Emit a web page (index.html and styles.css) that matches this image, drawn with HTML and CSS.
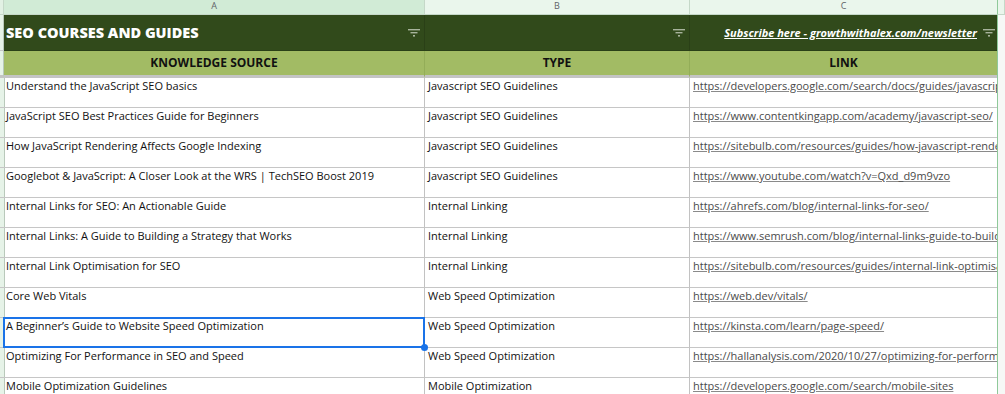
FILE: index.html
```html
<!DOCTYPE html>
<html>
<head>
<meta charset="utf-8">
<link rel="stylesheet" href="styles.css">
</head>
<body>
<div class="sheet">
  <div class="row colheads">
    <div class="c corner"></div>
    <div class="c ca sel">A</div>
    <div class="c cb">B</div>
    <div class="c cc">C</div>
    <div class="c edge"></div>
  </div>
  <div class="row title">
    <div class="c corner"></div>
    <div class="c ca"><span class="ttl">SEO COURSES AND GUIDES</span><svg class="filt" width="12" height="8" viewBox="0 0 12 8"><rect x="0" y="0" width="12" height="1.4"/><rect x="2.5" y="3" width="7" height="1.4"/><rect x="5" y="6" width="2" height="1.6"/></svg></div>
    <div class="c cb"><svg class="filt" width="12" height="8" viewBox="0 0 12 8"><rect x="0" y="0" width="12" height="1.4"/><rect x="2.5" y="3" width="7" height="1.4"/><rect x="5" y="6" width="2" height="1.6"/></svg></div>
    <div class="c cc"><span class="sub">Subscribe here - growthwithalex.com/newsletter</span><svg class="filt" width="12" height="8" viewBox="0 0 12 8"><rect x="0" y="0" width="12" height="1.4"/><rect x="2.5" y="3" width="7" height="1.4"/><rect x="5" y="6" width="2" height="1.6"/></svg></div>
    <div class="c edge"></div>
  </div>
  <div class="row head">
    <div class="c corner"></div>
    <div class="c ca">KNOWLEDGE SOURCE</div>
    <div class="c cb">TYPE</div>
    <div class="c cc">LINK</div>
    <div class="c edge"></div>
  </div>
  <div class="row data">
    <div class="c corner"></div>
    <div class="c ca">Understand the JavaScript SEO basics</div>
    <div class="c cb">Javascript SEO Guidelines</div>
    <div class="c cc"><span class="lnk">https://developers.google.com/search/docs/guides/javascript-seo-basics</span></div>
    <div class="c edge"></div>
  </div>
  <div class="row data">
    <div class="c corner"></div>
    <div class="c ca">JavaScript SEO Best Practices Guide for Beginners</div>
    <div class="c cb">Javascript SEO Guidelines</div>
    <div class="c cc"><span class="lnk">https://www.contentkingapp.com/academy/javascript-seo/</span></div>
    <div class="c edge"></div>
  </div>
  <div class="row data">
    <div class="c corner"></div>
    <div class="c ca">How JavaScript Rendering Affects Google Indexing</div>
    <div class="c cb">Javascript SEO Guidelines</div>
    <div class="c cc"><span class="lnk">https://sitebulb.com/resources/guides/how-javascript-rendering-affects-google-indexing/</span></div>
    <div class="c edge"></div>
  </div>
  <div class="row data">
    <div class="c corner"></div>
    <div class="c ca">Googlebot &amp; JavaScript: A Closer Look at the WRS | TechSEO Boost 2019</div>
    <div class="c cb">Javascript SEO Guidelines</div>
    <div class="c cc"><span class="lnk">https://www.youtube.com/watch?v=Qxd_d9m9vzo</span></div>
    <div class="c edge"></div>
  </div>
  <div class="row data">
    <div class="c corner"></div>
    <div class="c ca">Internal Links for SEO: An Actionable Guide</div>
    <div class="c cb">Internal Linking</div>
    <div class="c cc"><span class="lnk">https://ahrefs.com/blog/internal-links-for-seo/</span></div>
    <div class="c edge"></div>
  </div>
  <div class="row data">
    <div class="c corner"></div>
    <div class="c ca">Internal Links: A Guide to Building a Strategy that Works</div>
    <div class="c cb">Internal Linking</div>
    <div class="c cc"><span class="lnk">https://www.semrush.com/blog/internal-links-guide-to-building-a-strategy/</span></div>
    <div class="c edge"></div>
  </div>
  <div class="row data">
    <div class="c corner"></div>
    <div class="c ca">Internal Link Optimisation for SEO</div>
    <div class="c cb">Internal Linking</div>
    <div class="c cc"><span class="lnk">https://sitebulb.com/resources/guides/internal-link-optimisation/</span></div>
    <div class="c edge"></div>
  </div>
  <div class="row data">
    <div class="c corner"></div>
    <div class="c ca">Core Web Vitals</div>
    <div class="c cb">Web Speed Optimization</div>
    <div class="c cc"><span class="lnk">https://web.dev/vitals/</span></div>
    <div class="c edge"></div>
  </div>
  <div class="row data">
    <div class="c corner"></div>
    <div class="c ca selected">A Beginner’s Guide to Website Speed Optimization<span class="handle"></span></div>
    <div class="c cb">Web Speed Optimization</div>
    <div class="c cc"><span class="lnk">https://kinsta.com/learn/page-speed/</span></div>
    <div class="c edge"></div>
  </div>
  <div class="row data">
    <div class="c corner"></div>
    <div class="c ca">Optimizing For Performance in SEO and Speed</div>
    <div class="c cb">Web Speed Optimization</div>
    <div class="c cc"><span class="lnk">https://hallanalysis.com/2020/10/27/optimizing-for-performance-in-seo-and-speed/</span></div>
    <div class="c edge"></div>
  </div>
  <div class="row data">
    <div class="c corner"></div>
    <div class="c ca">Mobile Optimization Guidelines</div>
    <div class="c cb">Mobile Optimization</div>
    <div class="c cc"><span class="lnk">https://developers.google.com/search/mobile-sites</span></div>
    <div class="c edge"></div>
  </div>
</div>
</body>
</html>
```
FILE: styles.css
```css
html, body {
  margin: 0;
  padding: 0;
  background: #ffffff;
  overflow: hidden;
}
.sheet {
  width: 1005px;
  font-family: "Open Sans", "Liberation Sans", sans-serif;
  color: #111;
}
.row {
  display: grid;
  grid-template-columns: 4px 421px 265px 307px 8px;
}
.c {
  box-sizing: border-box;
  border-right: 1px solid #c2c2c2;
  border-bottom: 1px solid #c6c6c6;
  overflow: hidden;
  white-space: nowrap;
  position: relative;
}
.edge {
  border-right: none;
  border-left: 1px solid #8fc99a;
  background: #f6f8f6;
  border-bottom: none;
}
.row .c.cc { border-right: none; }
.corner { background: #e6f3e8; border-right: 1px solid #b9c9bb; }

.colheads { height: 15px; }
.colheads .c {
  background: #eaf6ec;
  border-bottom: 1px solid #c5d8c8;
  border-right: 1px solid #c5d8c8;
  font-size: 9px;
  line-height: 11px;
  color: #5f6368;
  text-align: center;
  padding-top: 0;
}
.colheads .c.sel { background: #d1ebd6; }
.colheads .corner { background: #e2f1e4; }

.title { height: 36px; }
.title .c {
  background: #314a1b;
  border-bottom: 1px solid #2a4017;
  border-right: 1px solid #2a4017;
  display: flex;
  align-items: center;
  padding: 0 4px 0 2px;
}
.title .cc { padding-right: 2px; }
.title .corner { background: #e6f3e8; border-right: 1px solid #b9c9bb; border-bottom: 1px solid #c6c6c6; padding: 0; }
.title .edge { background: #f6f8f6; border-right: none; border-bottom: none; }
.ttl {
  flex: 1;
  color: #ffffff;
  font-weight: 800;
  font-size: 14.5px;
}
.title .cb { justify-content: flex-end; }
.title .cc { justify-content: flex-end; }
.sub {
  color: #ffffff;
  font-weight: 700;
  font-style: italic;
  font-size: 11px;
  text-decoration: underline;
  margin-right: 6px;
}
.filt { fill: #a7b39c; flex: none; }

.head { height: 27px; }
.head .c {
  background: #a2bb64;
  border-right: 1px solid #93ad58;
  border-bottom: 3px solid #c4c4c4;
  text-align: center;
  font-weight: 700;
  font-size: 12px;
  line-height: 23px;
  color: #111;
}
.head .corner { background: #e6f3e8; border-right: 1px solid #b9c9bb; }
.head .edge { background: #f6f8f6; border-bottom: none; border-right: none; }

.data { height: 30px; }
.data .c {
  font-size: 11px;
  line-height: 14px;
  padding: 1px 2px 0 2px;
}
.data .cb { padding-left: 3px; }
.data .cc { padding-left: 3px; }
.data .edge { padding: 0; }
.lnk {
  color: #4a4a4a;
  text-decoration: underline;
  text-decoration-color: #8a8a8a;
}
.data .c.selected {
  overflow: visible;
  z-index: 2;
}
.data .c.selected::after {
  content: "";
  position: absolute;
  left: -1px;
  top: -1px;
  right: -1px;
  bottom: -1px;
  border: 2px solid #1a73e8;
  pointer-events: none;
}
.handle {
  position: absolute;
  right: -4px;
  bottom: -4px;
  width: 7px;
  height: 7px;
  border-radius: 50%;
  background: #1a73e8;
  z-index: 3;
}
```
